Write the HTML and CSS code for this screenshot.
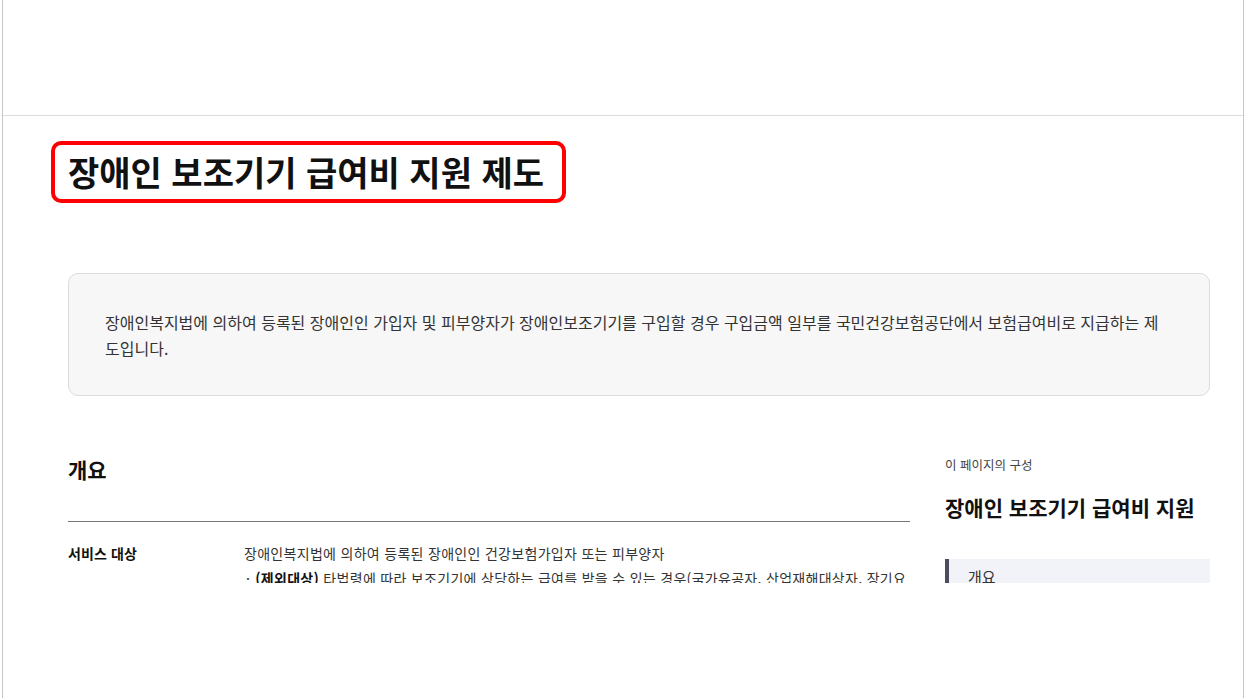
FILE: index.html
```html
<!DOCTYPE html>
<html lang="ko">
<head>
<meta charset="utf-8">
<title>장애인 보조기기 급여비 지원 제도</title>
<link rel="stylesheet" href="styles.css">
</head>
<body>
<div class="frame">
  <header class="topbar"></header>
  <div class="viewport">
    <div class="content">
      <h1 class="page-title">장애인 보조기기 급여비 지원 제도</h1>
      <div class="summary">
        <p>장애인복지법에 의하여 등록된 장애인인 가입자 및 피부양자가 장애인보조기기를 구입할 경우 구입금액 일부를 국민건강보험공단에서 보험급여비로 지급하는 제도입니다.</p>
      </div>
      <div class="layout">
        <main class="main">
          <h2 class="section-title">개요</h2>
          <div class="row">
            <div class="row-label">서비스 대상</div>
            <div class="row-value">
              <p>장애인복지법에 의하여 등록된 장애인인 건강보험가입자 또는 피부양자</p>
              <p class="bullet"><span class="dot">·</span><span><b>(제외대상)</b> 타법령에 따라 보조기기에 상당하는 급여를 받을 수 있는 경우(국가유공자, 산업재해대상자, 장기요양수급자 등)</span></p>
            </div>
          </div>
        </main>
        <aside class="toc">
          <div class="toc-label">이 페이지의 구성</div>
          <div class="toc-title">장애인 보조기기 급여비 지원</div>
          <ul class="toc-list">
            <li class="toc-item active">개요</li>
            <li class="toc-item">지원 내용</li>
          </ul>
        </aside>
      </div>
    </div>
  </div>
</div>
</body>
</html>
```

FILE: styles.css
```css
* { box-sizing: border-box; }
html, body { margin: 0; padding: 0; background: #fff; }
body {
  font-family: "Noto Sans CJK KR", "Noto Sans", sans-serif;
  color: #333;
}
.frame {
  margin-left: 2px;
  width: 1242px;
  height: 698px;
  border-left: 1px solid #c8c8c8;
  border-right: 1px solid #c8c8c8;
}
.topbar {
  height: 116px;
  border-bottom: 1px solid #dcdcdc;
}
.viewport {
  height: 467px;
  overflow: hidden;
}
.content {
  padding: 0 33px 0 65px;
}
.page-title {
  display: inline-block;
  margin: 25px 0 0 -17px;
  padding: 0 18px 0 13px;
  height: 62px;
  line-height: 54px;
  border: 4px solid #f00;
  border-radius: 10px;
  font-size: 34px;
  font-weight: 700;
  color: #111;
}
.summary {
  margin-top: 70px;
  width: 1142px;
  background: #f7f7f7;
  border: 1px solid #dcdcdc;
  border-radius: 10px;
  padding: 35px 36px 34px 36px;
}
.summary p {
  margin: 0;
  font-size: 16px;
  line-height: 26px;
  color: #333;
}
.layout {
  display: grid;
  grid-template-columns: 842px 265px;
  column-gap: 35px;
  margin-top: 59px;
}
.section-title {
  margin: 0;
  font-size: 21px;
  line-height: 28px;
  font-weight: 700;
  color: #111;
  padding-bottom: 38px;
  border-bottom: 1px solid #777;
}
.row {
  display: flex;
  padding-top: 19px;
}
.row-label {
  width: 176px;
  flex: none;
  font-size: 14px;
  letter-spacing: 0.1px;
  line-height: 25px;
  font-weight: 700;
  color: #111;
}
.row-value p {
  margin: 0;
  font-size: 14px;
  letter-spacing: 0.3px;
  line-height: 25px;
  color: #333;
}
.row-value .bullet {
  display: flex;
  gap: 5px;
}
.row-value .dot { padding-left: 2px; }
.row-value b { color: #111; }
.toc-label {
  font-size: 12.5px;
  line-height: 18px;
  color: #444;
  padding-top: 1px;
}
.toc-title {
  margin-top: 19px;
  font-size: 21px;
  line-height: 28px;
  font-weight: 700;
  color: #111;
}
.toc-list {
  list-style: none;
  margin: 38px 0 0 0;
  padding: 0;
}
.toc-item {
  font-size: 15px;
  line-height: 24px;
  padding: 6px 0 6px 19px;
  color: #333;
}
.toc-item.active {
  background: #f2f3f8;
  border-left: 4px solid #4b4d5e;
}
```
